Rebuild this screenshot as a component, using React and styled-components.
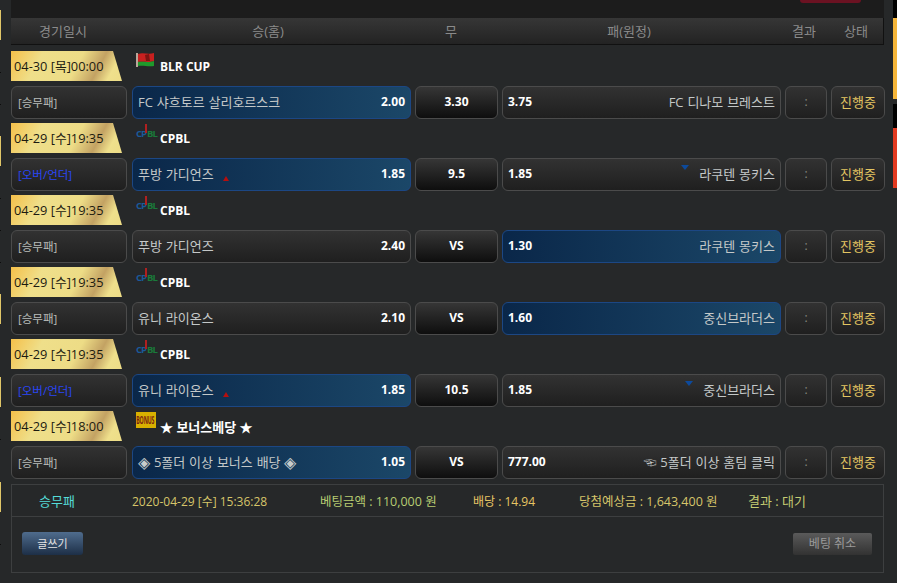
import styled, { createGlobalStyle } from "styled-components";

const Global = createGlobalStyle`
  html, body { margin: 0; padding: 0; background: #26292a; }
  * { box-sizing: border-box; }
`;

const FONT = `"Open Sans", "Noto Sans CJK KR", sans-serif`;
const BG = "#262829";
const GOLD = "#e0c668";
const TICK = "#0c0c0c";

const Page = styled.div`
  display: flex;
  width: 897px;
  height: 583px;
  overflow: hidden;
  background: ${BG};
  font-family: ${FONT};
  font-size: 13px;
`;

const LeftEdge = styled.div`
  width: 1px;
  flex: none;
  display: flex;
  flex-direction: column;
`;

const EdgePiece = styled.div`
  height: ${(p) => p.$h}px;
  flex: none;
  background: ${(p) => p.$c};
`;

const Main = styled.div`
  width: 874px;
  margin-left: 10px;
  flex: none;
`;

const RightEdge = styled.div`
  width: 4px;
  margin-left: 8px;
  flex: none;
  display: flex;
  flex-direction: column;
`;

const TopBar = styled.div`
  height: 18px;
  width: 873px;
  background: #1c1c1c;
  display: flex;
  justify-content: flex-end;
  padding-right: 23px;
`;

const RedButton = styled.div`
  width: 61px;
  height: 3px;
  background: #6b1222;
  border-radius: 0 0 3px 3px;
`;

const Header = styled.div`
  height: 27px;
  width: 873px;
  display: grid;
  grid-template-columns: 104px 298px 60px 288px 54px 42px;
  column-gap: 4px;
  align-items: center;
  padding-bottom: 2px;
  background: linear-gradient(#363636, #232323);
  border-bottom: 1px solid #111;
  border-right: 1px solid #111;
  color: #8b8b8b;
  text-align: center;
`;

const Group = styled.div`
  height: 72px;
  padding-top: 6px;
`;

const List = styled.div``;

const MatchHead = styled.div`
  height: 35px;
  display: flex;
`;

const DateTag = styled.div`
  width: 111px;
  height: 30px;
  flex: none;
  padding-left: 3px;
  line-height: 30px;
  color: #1c1a10;
  font-size: 12.8px;
  white-space: nowrap;
  background: linear-gradient(118deg, #f5c04a 0%, #efdf8a 26%, #eddc86 58%, #c3a263 76%, #efe08c 88%, #eddc86 100%);
  clip-path: polygon(0 0, 102px 0, 111px 100%, 0 100%);
`;

const League = styled.div`
  display: flex;
  margin-left: 14px;
  height: 30px;
`;

const LogoBox = styled.div`
  width: 20px;
  height: 16px;
  flex: none;
  position: relative;
  top: 1px;
`;

const LeagueName = styled.div`
  margin-left: 4px;
  padding-top: 8px;
  line-height: 16px;
  color: #fff;
  font-weight: 700;
  font-size: ${(p) => (p.$big ? 13 : 12)}px;
  white-space: nowrap;
`;

const CpblMark = styled.div`
  display: flex;
  font-size: 9.5px;
  font-weight: 700;
  line-height: 10px;
  padding-top: 5px;
  letter-spacing: -1px;
  position: relative;
`;

const CpblPart = styled.span`
  color: ${(p) => p.$c};
  margin-left: ${(p) => p.$gap || 0}px;
`;

const CpblPin = styled.span`
  position: absolute;
  left: 9px;
  top: 0;
  width: 2px;
  height: 9px;
  background: #b02020;
`;

const BonusMark = styled.div`
  width: 20px;
  height: 16px;
  background: #d8b000;
  overflow: hidden;
`;

const BonusText = styled.div`
  width: 32px;
  color: #7a2410;
  font-size: 9px;
  font-weight: 700;
  line-height: 16px;
  letter-spacing: -0.2px;
  text-align: center;
  transform: scale(0.58, 1.2);
  transform-origin: 0 50%;
`;

const BetRow = styled.div`
  display: grid;
  grid-template-columns: 117px 279px 83px 279px 42px 54px;
  column-gap: 4px;
  height: 33px;
`;

const Cell = styled.div`
  border: 1px solid #4b4b4b;
  border-radius: 6px;
  background: linear-gradient(#323232, #1f1f1f);
  display: flex;
  align-items: center;
  justify-content: center;
  padding-bottom: 2px;
`;

const TypeCell = styled(Cell)`
  justify-content: flex-start;
  padding-left: 6px;
  width: 116px;
  font-size: 11.5px;
  color: ${(p) => (p.$ou ? "#2a46f5" : "#b9bdb9")};
`;

const OddsCell = styled(Cell)`
  justify-content: space-between;
  padding: 0 5px 2px;
  color: #c4c8c8;
  white-space: nowrap;
  ${(p) =>
    p.$picked &&
    `
    border-color: #1c4784;
    background: linear-gradient(90deg, #0a2749, #1b4768);
  `}
`;

const OddsValue = styled.span`
  color: #fff;
  font-weight: 700;
  font-size: 12px;
`;

const TeamName = styled.span`
  display: flex;
  align-items: center;
  white-space: pre;
  word-spacing: 0.5px;
`;

const Diamond = styled.span`
  font-size: 16px;
  line-height: 16px;
  color: #c8cccc;
`;

const UpMark = styled.i`
  width: 0;
  height: 0;
  margin: 9px 0 0 9px;
  border-left: 3px solid transparent;
  border-right: 3px solid transparent;
  border-bottom: 5px solid #b50f0f;
`;

const DownMark = styled.i`
  width: 0;
  height: 0;
  margin: -12px 10px 0 0;
  border-left: 4px solid transparent;
  border-right: 4px solid transparent;
  border-top: 5px solid #0d4a9c;
`;

const DrawCell = styled(Cell)`
  background: linear-gradient(#363636, #0e0e0e);
  color: #fff;
  font-weight: 700;
  font-size: 12px;
`;

const ResultCell = styled(Cell)`
  color: #85887f;
  font-size: 12px;
`;

const StatusCell = styled(Cell)`
  color: #e3c562;
`;

const InfoPanel = styled.div`
  margin-top: 7px;
  width: 873px;
  height: 89px;
  border: 1px solid #3d3f40;
`;

const InfoRow = styled.div`
  height: 32px;
  display: flex;
  align-items: center;
  border-bottom: 1px solid #3d3f40;
  white-space: nowrap;
`;

const InfoItem = styled.span`
  flex: none;
  width: ${(p) => p.$w}px;
  color: ${(p) => p.$c};
  font-size: ${(p) => p.$size || 12.5}px;
  padding-right: ${(p) => p.$pr || 0}px;
  text-align: ${(p) => p.$align || "left"};
`;

const ActionRow = styled.div`
  height: 55px;
  padding: 15px 11px 0 10px;
  display: flex;
  justify-content: space-between;
  align-items: flex-start;
`;

const WriteButton = styled.div`
  width: 61px;
  height: 23px;
  border-radius: 3px;
  background: linear-gradient(#4f6c8d, #1d2f47);
  color: #e4e4e4;
  font-size: 11px;
  line-height: 23px;
  text-align: center;
`;

const CancelButton = styled.div`
  width: 79px;
  height: 22px;
  margin-top: 1px;
  border-radius: 2px;
  background: linear-gradient(#5a5a5a, #323232);
  color: #9b9b9b;
  font-size: 12px;
  line-height: 22px;
  text-align: center;
`;

const leftPieces = [
  [10, BG], [30, GOLD], [32, BG], [1, TICK], [31, BG], [1, TICK], [31, BG], [30, GOLD],
  [32, BG], [1, TICK], [31, BG], [1, TICK], [31, BG], [1, TICK], [31, BG], [30, GOLD],
  [53, BG], [30, GOLD], [32, BG], [1, TICK], [42, BG], [30, GOLD], [32, BG], [1, TICK],
];

const rightPieces = [
  [18, "#000"], [81, "#f6b63a"], [5, BG], [24, "#000"], [60, "#e23a20"],
];

const bonusHome = (
  <>
    <Diamond>◈</Diamond> 5폴더 이상 보너스 배당 <Diamond>◈</Diamond>
  </>
);

const matches = [
  { date: "04-30 [목]00:00", logo: "flag", league: "BLR CUP", type: "[승무패]", home: "FC 샤흐토르 살리호르스크", homeOdds: "2.00", draw: "3.30", away: "FC 디나모 브레스트", awayOdds: "3.75", pick: "home" },
  { date: "04-29 [수]19:35", logo: "cpbl", league: "CPBL", type: "[오버/언더]", ou: true, home: "푸방 가디언즈", homeOdds: "1.85", draw: "9.5", away: "라쿠텐 몽키스", awayOdds: "1.85", pick: "home" },
  { date: "04-29 [수]19:35", logo: "cpbl", league: "CPBL", type: "[승무패]", home: "푸방 가디언즈", homeOdds: "2.40", draw: "VS", away: "라쿠텐 몽키스", awayOdds: "1.30", pick: "away" },
  { date: "04-29 [수]19:35", logo: "cpbl", league: "CPBL", type: "[승무패]", home: "유니 라이온스", homeOdds: "2.10", draw: "VS", away: "중신브라더스", awayOdds: "1.60", pick: "away" },
  { date: "04-29 [수]19:35", logo: "cpbl", league: "CPBL", type: "[오버/언더]", ou: true, home: "유니 라이온스", homeOdds: "1.85", draw: "10.5", away: "중신브라더스", awayOdds: "1.85", pick: "home" },
  { date: "04-29 [수]18:00", logo: "bonus", league: "★ 보너스베당 ★", type: "[승무패]", home: bonusHome, homeOdds: "1.05", draw: "VS", away: "☜ 5폴더 이상 홈팀 클릭", awayOdds: "777.00", pick: "home" },
];

const FlagLogo = () => (
  <svg width="20" height="16" viewBox="0 0 20 16">
    <rect x="0" y="1" width="2" height="14" fill="#b9a79a" />
    <path d="M2 2 C7 0 12 3 18 1 L18 9 C12 11 7 9 2 10 Z" fill="#c8201f" />
    <path d="M2 10 C7 9 12 11 18 9 L18 14 C12 15 7 13 2 14 Z" fill="#1f9a2c" />
    <path d="M9 3 L13 2 L14 9 L10 9 Z" fill="#7c1512" />
  </svg>
);

const LeagueLogo = ({ kind }) => {
  if (kind === "flag") return <FlagLogo />;
  if (kind === "bonus") {
    return (
      <BonusMark>
        <BonusText>BONUS</BonusText>
      </BonusMark>
    );
  }
  return (
    <CpblMark>
      <CpblPart $c="#1a5a9a">CP</CpblPart>
      <CpblPart $c="#1a7a3a" $gap={1}>BL</CpblPart>
      <CpblPin />
    </CpblMark>
  );
};

const App = () => {
  return (
    <Page>
      <Global />
      <LeftEdge>
        {leftPieces.map(([h, c], i) => (
          <EdgePiece key={i} $h={h} $c={c} />
        ))}
      </LeftEdge>
      <Main>
        <TopBar>
          <RedButton />
        </TopBar>
        <Header>
          <span>경기일시</span>
          <span>승(홈)</span>
          <span>무</span>
          <span>패(원정)</span>
          <span>결과</span>
          <span>상태</span>
        </Header>
        <List>
          {matches.map((m, i) => (
            <Group key={i}>
              <MatchHead>
                <DateTag>{m.date}</DateTag>
                <League>
                  <LogoBox>
                    <LeagueLogo kind={m.logo} />
                  </LogoBox>
                  <LeagueName $big={m.logo === "bonus"}>{m.league}</LeagueName>
                </League>
              </MatchHead>
              <BetRow>
                <TypeCell $ou={m.ou}>{m.type}</TypeCell>
                <OddsCell $picked={m.pick === "home"}>
                  <TeamName>
                    {m.home}
                    {m.ou && <UpMark />}
                  </TeamName>
                  <OddsValue>{m.homeOdds}</OddsValue>
                </OddsCell>
                <DrawCell>{m.draw}</DrawCell>
                <OddsCell $picked={m.pick === "away"}>
                  <OddsValue>{m.awayOdds}</OddsValue>
                  <TeamName>
                    {m.ou && <DownMark />}
                    {m.away}
                  </TeamName>
                </OddsCell>
                <ResultCell>:</ResultCell>
                <StatusCell>진행중</StatusCell>
              </BetRow>
            </Group>
          ))}
        </List>
        <InfoPanel>
          <InfoRow>
            <InfoItem $w={120} $pr={30} $c="#55dcd8" $size={13} $align="center">승무패</InfoItem>
            <InfoItem $w={188} $c="#d6c56a" $size={12}>2020-04-29 [수] 15:36:28</InfoItem>
            <InfoItem $w={153} $c="#b7cc72">베팅금액 : 110,000 원</InfoItem>
            <InfoItem $w={106} $c="#e6c564" $size={12}>배당 : 14.94</InfoItem>
            <InfoItem $w={169} $c="#d6c56a">당첨예상금 : 1,643,400 원</InfoItem>
            <InfoItem $w={80} $c="#c4cc72" $size={13}>결과 : 대기</InfoItem>
          </InfoRow>
          <ActionRow>
            <WriteButton>글쓰기</WriteButton>
            <CancelButton>베팅 취소</CancelButton>
          </ActionRow>
        </InfoPanel>
      </Main>
      <RightEdge>
        {rightPieces.map(([h, c], i) => (
          <EdgePiece key={i} $h={h} $c={c} />
        ))}
      </RightEdge>
    </Page>
  );
};

export default App;
